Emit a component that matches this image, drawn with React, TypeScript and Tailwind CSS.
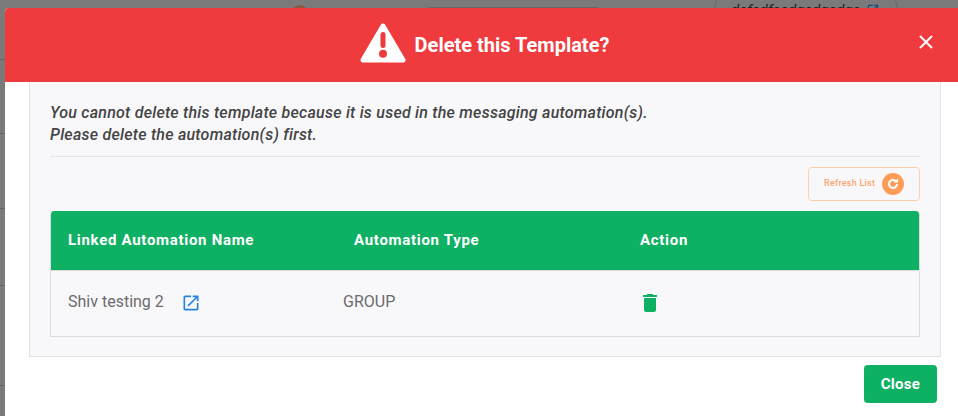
import React from 'react';

const ROW_LINES = ['top-[59px]', 'top-[133px]', 'top-[208px]', 'top-[285px]', 'top-[385px]'];

const WarningIcon = () => (
  <svg width="46" height="42" viewBox="0 0 46 42" className="shrink-0">
    <path d="M23 3 L43 37 H3 Z" fill="#fff" stroke="#fff" strokeWidth="5" strokeLinejoin="round" />
    <path d="M23 11.5 V22.5" stroke="#ef3b3d" strokeWidth="5" strokeLinecap="round" />
    <circle cx="23" cy="30.7" r="4" fill="#ef3b3d" />
  </svg>
);

const Backdrop = () => (
  <div className="absolute inset-0 bg-[#7a7a7a]">
    {ROW_LINES.map(c => (
      <div key={c} className={`absolute left-0 w-[6px] h-px bg-[#636363] ${c}`} />
    ))}
    <div className="absolute left-[292px] top-[5px] w-[16px] h-[16px] rounded-full bg-[#8a5a3c]" />
    <div className="absolute left-[426px] top-[7px] w-[174px] h-[10px] rounded-t-[3px] border border-[#686868]" />
    <div className="absolute left-[714px] top-[-12px] w-[184px] h-[44px] rounded-full border border-[#656565] flex items-center pl-[16px] gap-[6px]">
      <span className="text-[15px] italic text-[#222] leading-none">defedfeedgedgedge</span>
      <svg width="14" height="14" viewBox="0 0 24 24" fill="#1a4a80">
        <path d="M19 19H5V5h7V3H5c-1.11 0-2 .9-2 2v14c0 1.1.89 2 2 2h14c1.1 0 2-.9 2-2v-7h-2v7zM14 3v2h3.59l-9.83 9.83 1.41 1.41L19 6.41V10h2V3h-7z" />
      </svg>
    </div>
  </div>
);

export default function App() {
  return (
    <div className="relative w-[958px] h-[416px] overflow-hidden font-['Roboto',sans-serif]">
      <Backdrop />
      <div className="relative ml-[5px] mt-[8px] h-[408px] bg-white rounded-tl-[4px] overflow-hidden flex flex-col">
        <div className="relative h-[74px] shrink-0 bg-[#ef3b3d] flex items-center justify-center text-white">
          <div className="flex items-center gap-[9px] ml-[6px] mt-[-2px]">
            <WarningIcon />
            <span className="text-[20px] font-bold leading-none mt-[2px]">Delete this Template?</span>
          </div>
          <button className="absolute right-[25px] top-[27px]">
            <svg width="14" height="14" viewBox="0 0 14 14" className="block">
              <path d="M1 1 L13 13 M13 1 L1 13" stroke="#fff" strokeWidth="2" />
            </svg>
          </button>
        </div>

        <div className="ml-[24px] mr-[17px] h-[275px] shrink-0 bg-[#f8f8fb] border-x border-b border-[#e2e2e2] px-[20px] flex flex-col">
          <p className="pt-[20px] text-[16px] leading-[22px] font-medium italic text-[#444] tracking-[0.24px] pb-[10px] border-b border-[#e4e4e8]">
            You cannot delete this template because it is used in the messaging automation(s).
            <br />
            Please delete the automation(s) first.
          </p>

          <div className="flex justify-end mt-[10px]">
            <button className="w-[112px] h-[34px] border border-[#fdcfae] rounded-[4px] flex items-center pl-[15px] gap-[7px]">
              <span className="text-[9px] font-medium text-[#fba66b] tracking-[0.25px]">Refresh List</span>
              <span className="w-[22px] h-[22px] rounded-full bg-[#ff9d57] flex items-center justify-center">
                <svg width="14" height="14" viewBox="0 0 14 14" fill="none">
                  <path d="M11 7a4 4 0 1 1-1.3-3" stroke="#fff" strokeWidth="2" />
                  <path d="M7.6 5.6 H12 V1.4 Z" fill="#fff" />
                </svg>
              </span>
            </button>
          </div>

          <div className="mt-[10px] h-[126px] border-x border-b border-[#dcdcdc] rounded-t-[4px] overflow-hidden">
            <div className="h-[60px] bg-[#0eb063] border-b border-[#dcdcdc] flex items-center text-white text-[15px] font-bold tracking-[0.7px]">
              <span className="w-[286px] pl-[17px]">Linked Automation Name</span>
              <span className="w-[286px] pl-[17px]">Automation Type</span>
              <span className="pl-[17px]">Action</span>
            </div>
            <div className="h-[65px] flex items-center text-[16px] text-[#6b6b6b] pb-[2px]">
              <div className="w-[292px] pl-[17px] flex items-center gap-[17px]">
                <span className="mt-[-2px]">Shiv testing 2</span>
                <svg width="20" height="20" viewBox="0 0 24 24" fill="#2684e0">
                  <path d="M19 19H5V5h7V3H5c-1.11 0-2 .9-2 2v14c0 1.1.89 2 2 2h14c1.1 0 2-.9 2-2v-7h-2v7zM14 3v2h3.59l-9.83 9.83 1.41 1.41L19 6.41V10h2V3h-7z" />
                </svg>
              </div>
              <span className="w-[295px] mt-[-2px]">GROUP</span>
              <svg width="24" height="24" viewBox="0 0 24 24" fill="#0eb063">
                <path d="M6 19c0 1.1.9 2 2 2h8c1.1 0 2-.9 2-2V7H6v12zM19 4h-3.5l-1-1h-5l-1 1H5v2h14V4z" />
              </svg>
            </div>
          </div>
        </div>

        <div className="flex justify-end mt-[8px] pr-[21px]">
          <button className="w-[73px] h-[38px] rounded-[4px] bg-[#0eb063] text-white text-[15px] font-bold tracking-[0.3px]">Close</button>
        </div>
      </div>
    </div>
  );
}
